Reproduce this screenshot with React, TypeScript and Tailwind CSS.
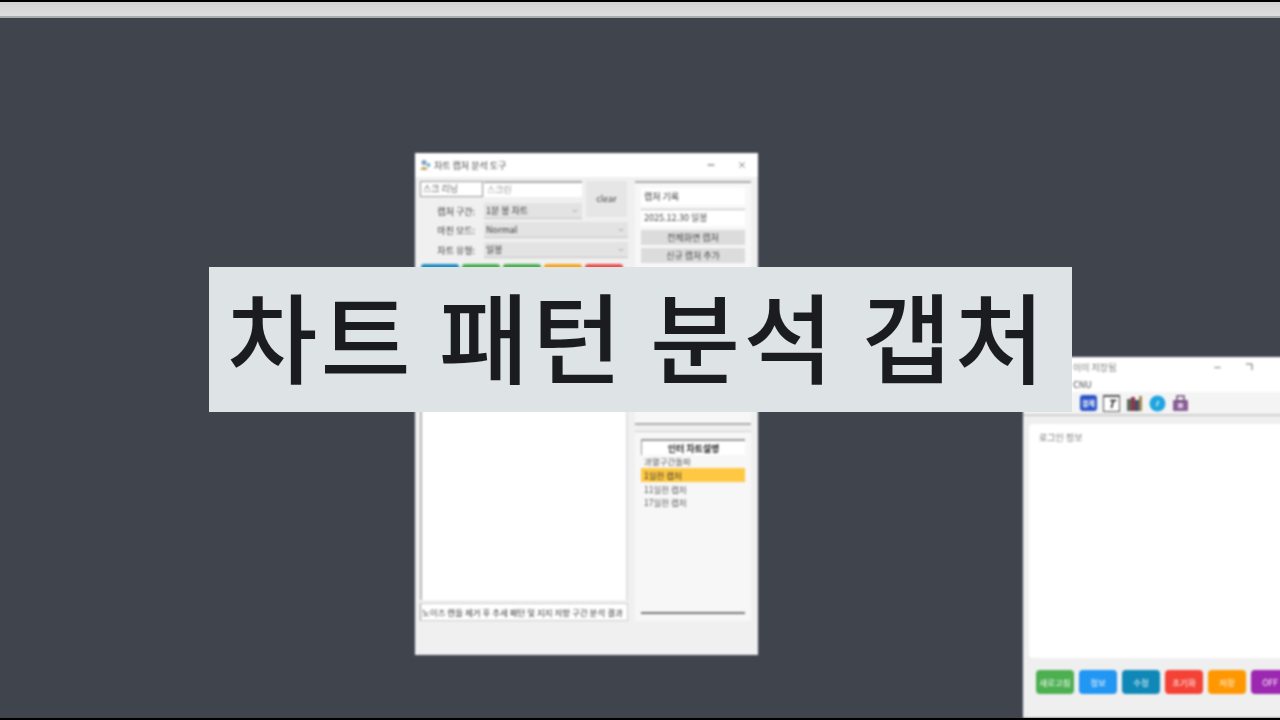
import { Minus, X, ChevronDown } from "lucide-react";

const font = { fontFamily: '"Noto Sans CJK KR", "Noto Sans", sans-serif' };

function Select({ text, width }: { text: string; width: string }) {
  return (
    <div className={`flex h-[16px] items-center justify-between bg-[#e3e3e3] border-b border-[#c4c4c4] pl-[2px] pr-[3px] ${width}`}>
      <span className="text-[9px] leading-none text-[#333]">{text}</span>
      <ChevronDown className="h-[8px] w-[8px] text-[#888]" />
    </div>
  );
}

function Label({ text }: { text: string }) {
  return <div className="w-[64px] pr-[9px] text-right text-[9px] leading-none text-[#333]">{text}</div>;
}

function MainWindow() {
  return (
    <div className="absolute left-[415px] top-[153px] flex h-[502px] w-[343px] flex-col bg-[#f0f0f0] blur-[0.8px]">
      <div className="flex h-[24px] items-center bg-white pl-[5px] pr-[11px]">
        <svg viewBox="0 0 11 12" className="h-[12px] w-[11px]">
          <circle cx="4" cy="3.5" r="2.5" fill="#7d9db5" />
          <path d="M0.5 11 C1 6.5 7 6.5 7.5 11 Z" fill="#c9a76a" />
          <circle cx="8.5" cy="6" r="2" fill="#6fb0d6" />
        </svg>
        <span className="ml-[3px] text-[9px] leading-none text-[#444]">차트 캡처 분석 도구</span>
        <Minus className="ml-auto h-[10px] w-[10px] text-[#333]" />
        <X className="ml-[21px] h-[10px] w-[10px] text-[#666]" />
      </div>
      <div className="flex gap-[7px] pl-[5px] pt-[4px]">
        <div className="flex h-[440px] w-[208px] flex-col">
          <div className="flex">
            <div className="flex-1">
              <div className="flex h-[16px] gap-[1px]">
                <div className="flex h-[16px] w-[63px] items-center border border-[#999] bg-white pl-[2px] text-[9px] text-[#666]">스크 리닝</div>
                <div className="flex h-[16px] w-[98px] items-center border-t-2 border-[#aaa] bg-white pl-[3px] text-[9px] text-[#999]">스크린</div>
              </div>
              <div className="mt-[6px] flex items-center">
                <Label text="캡처 구간:" />
                <Select text="1분 봉 차트" width="w-[98px]" />
              </div>
            </div>
            <div className="ml-[4px] mr-[1px] flex h-[36px] w-[41px] items-center justify-center bg-[#e6e6e6] text-[9px] text-[#444]">clear</div>
          </div>
          <div className="mt-[3px] flex items-center">
            <Label text="마진 모드:" />
            <Select text="Normal" width="w-[144px]" />
          </div>
          <div className="mt-[4px] flex items-center">
            <Label text="차트 유형:" />
            <Select text="일봉" width="w-[144px]" />
          </div>
          <div className="mt-[6px] flex gap-[3px] px-[1px]">
            <div className="h-[28px] w-[38px] rounded-[3px] bg-[#1f8fc4]" />
            <div className="h-[28px] w-[38px] rounded-[3px] bg-[#4caf50]" />
            <div className="h-[28px] w-[38px] rounded-[3px] bg-[#4caf50]" />
            <div className="h-[28px] w-[38px] rounded-[3px] bg-[#f5a623]" />
            <div className="h-[28px] w-[38px] rounded-[3px] bg-[#e9524f]" />
          </div>
          <div className="mt-[4px] flex-1 border-l-2 border-r-2 border-[#b5b5b5] border-r-[#e0e0e0] bg-white" />
          <div className="mt-[3px] flex h-[18px] items-center overflow-hidden whitespace-nowrap border border-[#ccc] border-l-[#999] bg-white pl-[1px] text-[8.5px] leading-none text-[#333]">
            노이즈 캔들 제거 후 추세 패턴 및 지지 저항 구간 분석 결과
          </div>
        </div>
        <div className="flex w-[116px] flex-col gap-[6px]">
          <div className="flex h-[244px] flex-col border-t-2 border-b-2 border-[#aaa] bg-[#f7f7f7] px-[6px] pt-[5px]">
            <div className="flex h-[17px] items-center bg-white pl-[3px] text-[9px] text-[#333]">캡처 기록</div>
            <div className="mt-[4px] flex h-[17px] items-center border-t border-[#bbb] bg-white pl-[3px] text-[9px] text-[#444]">2025.12.30 일봉</div>
            <div className="mt-[4px] flex h-[15px] items-center justify-center bg-[#dcdcdc] text-[9px] text-[#444]">전체화면 캡처</div>
            <div className="mt-[3px] flex h-[15px] items-center justify-center bg-[#dcdcdc] text-[9px] text-[#444]">신규 캡처 추가</div>
          </div>
          <div className="flex h-[190px] flex-col border-t border-[#ccc] bg-[#f7f7f7] px-[6px] pb-[7px] pt-[7px]">
            <div className="flex h-[16px] items-center justify-center border-l border-t-2 border-[#999] bg-white text-[9px] font-bold leading-none text-[#222]">인터 차트설명</div>
            <div className="flex h-[13px] items-center pl-[3px] text-[8.5px] text-[#555]">과열구간돌파</div>
            <div className="flex h-[14px] items-center bg-[#fec842] pl-[3px] text-[8.5px] text-[#333]">1일전 캡처</div>
            <div className="mt-[1px] flex h-[13px] items-center pl-[3px] text-[8.5px] text-[#555]">11일전 캡처</div>
            <div className="flex h-[13px] items-center pl-[3px] text-[8.5px] text-[#555]">17일전 캡처</div>
            <div className="mt-auto border-b-2 border-[#777]" />
          </div>
        </div>
      </div>
    </div>
  );
}

function SideWindow() {
  const buttons = [
    { text: "새로고침", color: "bg-[#4caf50]" },
    { text: "정보", color: "bg-[#2196f3]" },
    { text: "수정", color: "bg-[#0f88b8]" },
    { text: "초기화", color: "bg-[#f44336]" },
    { text: "저장", color: "bg-[#ff9800]" },
    { text: "OFF", color: "bg-[#9c27b0]" },
  ];
  return (
    <div className="absolute left-[1023px] top-[357px] flex h-[361px] w-[275px] flex-col bg-[#efeff0] blur-[0.8px]">
      <div className="flex h-[20px] items-center bg-white pl-[50px]">
        <span className="whitespace-nowrap text-[9px] leading-none text-[#777]">이미 저장됨</span>
        <Minus className="ml-[97px] h-[9px] w-[9px] text-[#444]" />
        <svg viewBox="0 0 8 8" className="ml-[23px] h-[8px] w-[8px]">
          <path d="M1 1 H7 V7" fill="none" stroke="#666" strokeWidth="1" />
        </svg>
      </div>
      <div className="flex h-[15px] items-center bg-white pl-[50px] text-[9px] leading-none text-[#444]">CNU</div>
      <div className="flex h-[24px] items-center gap-[6px] border-b-2 border-[#cfcfcf] bg-[#f4f4f4] pl-[57px]">
        <div className="flex h-[16px] w-[17px] items-center justify-center rounded-[3px] bg-[#2c55c9] text-[7px] font-bold text-white">결제</div>
        <div className="flex h-[17px] w-[17px] items-center justify-center border border-[#555] border-t-2 bg-white text-[11px] font-bold italic leading-none text-[#222]">T</div>
        <svg viewBox="0 0 17 17" className="h-[17px] w-[17px]">
          <rect x="1" y="4" width="4" height="12" fill="#5c6b5e" />
          <rect x="5" y="2" width="4" height="14" fill="#8a3a4a" />
          <rect x="9" y="5" width="4" height="11" fill="#44506e" />
          <rect x="13" y="1" width="3" height="15" fill="#a58a4a" />
        </svg>
        <svg viewBox="0 0 17 17" className="h-[17px] w-[17px]">
          <circle cx="8.5" cy="8.5" r="8" fill="#1fa5e0" />
          <path d="M9.5 6 L7.5 11" stroke="#fff" strokeWidth="1.2" />
        </svg>
        <svg viewBox="0 0 17 17" className="h-[17px] w-[17px]">
          <rect x="1" y="5" width="15" height="11" rx="1" fill="#8a5f96" />
          <rect x="5" y="1" width="7" height="5" fill="none" stroke="#6d4a78" strokeWidth="1.5" />
          <rect x="6" y="8" width="5" height="5" fill="#d6c3dc" />
        </svg>
      </div>
      <div className="ml-[6px] mt-[8px] h-[234px] w-[269px] shrink-0 rounded-[4px] bg-white pl-[10px] pt-[7px] text-[9px] text-[#777]">로그인 정보</div>
      <div className="mt-[12px] flex gap-[5px] pl-[13px]">
        {buttons.map((b) => (
          <div key={b.text} className={`flex h-[24px] w-[38px] shrink-0 items-center justify-center rounded-[4px] text-[8.5px] text-white ${b.color}`}>
            {b.text}
          </div>
        ))}
      </div>
    </div>
  );
}

export default function App() {
  return (
    <div className="relative flex h-screen w-full flex-col overflow-hidden bg-[#40444d]" style={font}>
      <div className="h-[2px] bg-black" />
      <div className="h-[16px] border-b-2 border-[#a9acad] bg-gradient-to-b from-[#d2d2d2] to-[#dedede]" />
      <MainWindow />
      <SideWindow />
      <div className="absolute left-[209px] top-[267px] flex h-[145px] w-[863px] items-center justify-center whitespace-nowrap bg-[#dee3e6] pb-[14px] pr-[6px] text-[98px] font-medium leading-none tracking-[3px] text-[#1a1c20]">
        차트 패턴 분석 갭처
      </div>
      <div className="absolute bottom-0 left-0 h-[2px] w-full bg-black" />
    </div>
  );
}
